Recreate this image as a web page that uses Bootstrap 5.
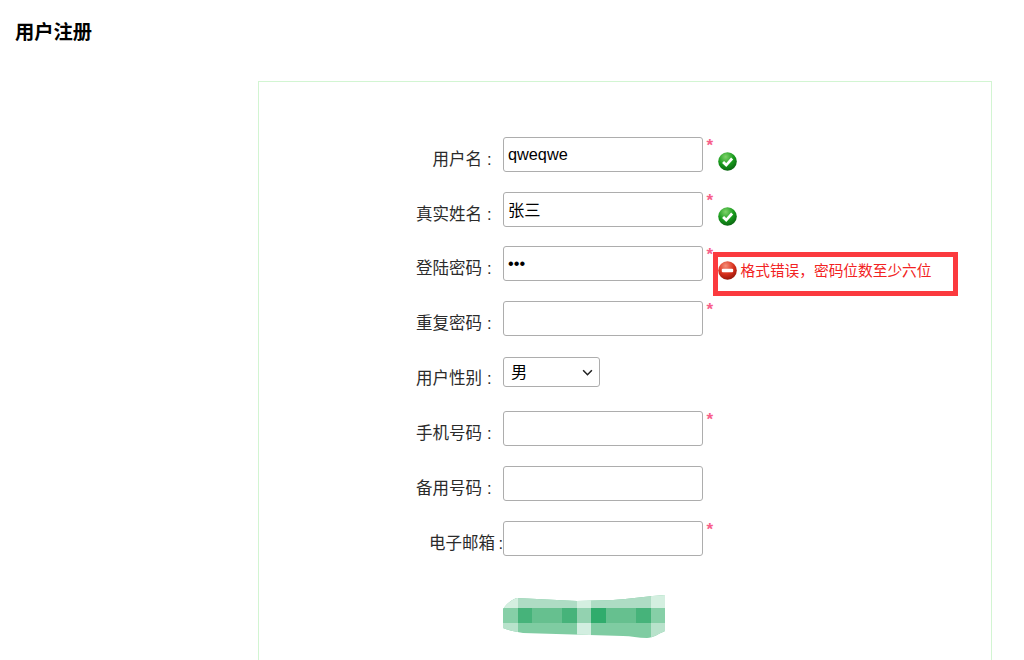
<!DOCTYPE html>
<html lang="zh">
<head>
<meta charset="utf-8">
<title>用户注册</title>
<link href="https://cdn.jsdelivr.net/npm/bootstrap@5.3.0/dist/css/bootstrap.min.css" rel="stylesheet">
<style>
body{font-family:"Liberation Sans","Noto Sans CJK SC",sans-serif;font-size:16px;color:#000;background:#fff;overflow:hidden;height:660px}
.reg-title{font-size:19.3px;font-weight:700;line-height:24px;margin:21px 0 0 15px}
.reg-panel{margin:36px 0 0 258px;width:734px;height:640px;border:1px solid #d2f5d2;border-bottom:0;padding-top:54.7px}
.reg-row{height:54.86px;align-items:flex-start}
.reg-label{width:244px;padding-right:11.4px;padding-top:10px;text-align:right;font-size:16.5px;line-height:24px;color:#2b2b2b;white-space:nowrap}
.reg-colon{padding-left:5px}
.reg-label-tight{padding-right:0}
.reg-colon-tight{padding-left:3.5px}
.reg-input.form-control{width:199.5px;height:35px;padding:0 4px;font-size:16.3px;line-height:33px;border:1px solid #adadad;border-radius:3px;color:#000;box-shadow:none;flex:none}
.reg-select.form-select{width:97px;height:30px;margin-top:1px;padding:0 0 0 7px;font-size:16.3px;line-height:28px;border:1px solid #adadad;border-radius:3px;color:#000;background-image:url("data:image/svg+xml,%3csvg xmlns='http://www.w3.org/2000/svg' viewBox='0 0 12 8'%3e%3cpath fill='none' stroke='%23222' stroke-width='1.8' d='M1 1.5l5 5 5-5'/%3e%3c/svg%3e");background-position:right 6px center;background-size:11px 7px;flex:none}
.reg-star{color:#f7608a;font-size:17px;font-weight:700;line-height:17px;margin:0 0 0 4px;width:8px;flex:none}
.reg-icon{width:19px;height:19px;margin:15px 0 0 3.5px;flex:none;display:block}
.reg-msg{color:#f22222;font-size:14.7px;line-height:18px;margin:16px 0 0 3.5px;white-space:nowrap}
.reg-msg-row{position:relative}
.reg-mark{position:absolute;left:454px;top:5.5px;width:245px;height:44px;border:5px solid #fb3a3e;pointer-events:none}
.reg-blob{display:block;margin:19px 0 0 244px}
</style>
</head>
<body>
<h1 class="reg-title">用户注册</h1>
<div class="reg-panel">
  <form>
    <div class="d-flex reg-row">
      <label class="reg-label">用户名<span class="reg-colon">:</span></label>
      <input class="form-control reg-input" type="text" value="qweqwe">
      <span class="reg-star">*</span>
      <svg class="reg-icon" viewBox="0 0 18 18"><defs><radialGradient id="gok" cx="40%" cy="25%" r="80%"><stop offset="0" stop-color="#7fd36a"/><stop offset=".55" stop-color="#179a1c"/><stop offset="1" stop-color="#0a5e10"/></radialGradient><radialGradient id="gbad" cx="40%" cy="25%" r="80%"><stop offset="0" stop-color="#f5907a"/><stop offset=".55" stop-color="#d9301c"/><stop offset="1" stop-color="#8e1408"/></radialGradient></defs><circle cx="9" cy="9" r="8.8" fill="url(#gok)"/><path d="M4.8 9.4 7.8 12.4 13.4 6.2" fill="none" stroke="#fff" stroke-width="2.6"/></svg>
    </div>
    <div class="d-flex reg-row">
      <label class="reg-label">真实姓名<span class="reg-colon">:</span></label>
      <input class="form-control reg-input" type="text" value="张三">
      <span class="reg-star">*</span>
      <svg class="reg-icon" viewBox="0 0 18 18"><circle cx="9" cy="9" r="8.8" fill="url(#gok)"/><path d="M4.8 9.4 7.8 12.4 13.4 6.2" fill="none" stroke="#fff" stroke-width="2.6"/></svg>
    </div>
    <div class="d-flex reg-row reg-msg-row">
      <label class="reg-label">登陆密码<span class="reg-colon">:</span></label>
      <input class="form-control reg-input" type="password" value="123">
      <span class="reg-star">*</span>
      <svg class="reg-icon" viewBox="0 0 18 18"><circle cx="9" cy="9" r="8.8" fill="url(#gbad)"/><rect x="3.6" y="7.4" width="10.8" height="3.2" rx="1" fill="#fff"/></svg>
      <span class="reg-msg">格式错误，密码位数至少六位</span>
      <div class="reg-mark"></div>
    </div>
    <div class="d-flex reg-row">
      <label class="reg-label">重复密码<span class="reg-colon">:</span></label>
      <input class="form-control reg-input" type="password">
      <span class="reg-star">*</span>
    </div>
    <div class="d-flex reg-row">
      <label class="reg-label">用户性别<span class="reg-colon">:</span></label>
      <select class="form-select reg-select"><option>男</option><option>女</option></select>
    </div>
    <div class="d-flex reg-row">
      <label class="reg-label">手机号码<span class="reg-colon">:</span></label>
      <input class="form-control reg-input" type="text">
      <span class="reg-star">*</span>
    </div>
    <div class="d-flex reg-row">
      <label class="reg-label">备用号码<span class="reg-colon">:</span></label>
      <input class="form-control reg-input" type="text">
    </div>
    <div class="d-flex reg-row">
      <label class="reg-label reg-label-tight">电子邮箱<span class="reg-colon-tight">:</span></label>
      <input class="form-control reg-input" type="text">
      <span class="reg-star">*</span>
    </div>
    <svg class="reg-blob" width="162" height="44" viewBox="0 0 162 44" shape-rendering="crispEdges">
      <defs><clipPath id="blobclip"><path d="M0 14C4 9 8 5 14 3L74 6 110 5C125 4 147 1 162 0L162 36C155 39 150 43 144 43 135 43 128 41 120 41L20 38C12 37 5 35 0 33Z"/></clipPath></defs>
      <g clip-path="url(#blobclip)">
        <rect width="162" height="44" fill="#7fcca2"/>
        <g fill="#aedcc4"><rect x="0" y="0" width="74" height="13"/><rect x="88" y="0" width="60" height="13"/></g>
        <g fill="#d4efe0"><rect x="0" y="0" width="15" height="13"/><rect x="74" y="0" width="14" height="13"/><rect x="148" y="0" width="14" height="13"/></g>
        <g fill="#b8e2cb"><rect x="0" y="28" width="15" height="16"/><rect x="148" y="28" width="14" height="16"/></g>
        <rect x="74" y="28" width="14" height="16" fill="#d2eee0"/>
        <g fill="#86cfa7"><rect x="0" y="13" width="15" height="15"/><rect x="148" y="13" width="14" height="15"/></g>
        <g fill="#66c08f"><rect x="29" y="13" width="30" height="15"/><rect x="103" y="13" width="30" height="15"/></g>
        <g fill="#46b37a"><rect x="15" y="13" width="14" height="15"/><rect x="59" y="13" width="15" height="15"/><rect x="133" y="13" width="15" height="15"/></g>
        <rect x="88" y="13" width="15" height="15" fill="#30ac6c"/>
        <rect x="74" y="13" width="14" height="15" fill="#93d2b0"/>
      </g>
    </svg>
  </form>
</div>
<script src="https://cdn.jsdelivr.net/npm/bootstrap@5.3.0/dist/js/bootstrap.bundle.min.js"></script>
</body>
</html>
